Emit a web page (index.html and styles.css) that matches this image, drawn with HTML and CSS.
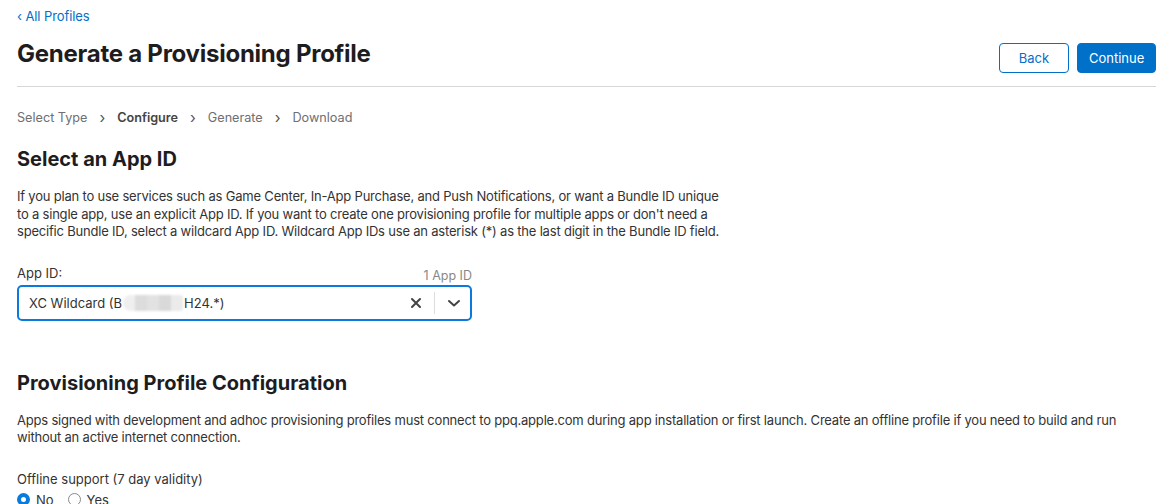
FILE: index.html
```html
<!DOCTYPE html>
<html lang="en">
<head>
<meta charset="utf-8">
<title>Generate a Provisioning Profile</title>
<link rel="stylesheet" href="styles.css">
</head>
<body>
<div class="page">
  <a class="back-link" href="#">&#8249; All Profiles</a>
  <header class="header">
    <h1 class="title">Generate a Provisioning Profile</h1>
    <div class="actions">
      <button class="btn btn-secondary">Back</button>
      <button class="btn btn-primary">Continue</button>
    </div>
  </header>
  <nav class="steps">
    <span class="step">Select Type</span>
    <span class="sep">&#8250;</span>
    <span class="step current">Configure</span>
    <span class="sep">&#8250;</span>
    <span class="step">Generate</span>
    <span class="sep">&#8250;</span>
    <span class="step">Download</span>
  </nav>

  <section class="section">
    <h2 class="section-title">Select an App ID</h2>
    <p class="desc narrow">If you plan to use services such as Game Center, In-App Purchase, and Push Notifications, or want a Bundle ID unique to a single app, use an explicit App ID. If you want to create one provisioning profile for multiple apps or don't need a specific Bundle ID, select a wildcard App ID. Wildcard App IDs use an asterisk (*) as the last digit in the Bundle ID field.</p>
    <div class="field">
      <div class="field-head">
        <span class="label">App ID:</span>
        <span class="count">1 App ID</span>
      </div>
      <div class="select">
        <span class="select-value">XC Wildcard (B<span class="blur"><i></i><i></i><i></i><i></i><i></i></span>H24.*)</span>
        <span class="select-controls">
          <svg class="icon-clear" width="12" height="12" viewBox="0 0 12 12"><path d="M2 2 L10 10 M10 2 L2 10" stroke="#444" stroke-width="2" stroke-linecap="round"/></svg>
          <span class="divider"></span>
          <svg class="icon-chevron" width="14" height="10" viewBox="0 0 14 10"><path d="M2 3 L7 7.5 L12 3" fill="none" stroke="#444" stroke-width="2" stroke-linecap="round" stroke-linejoin="round"/></svg>
        </span>
      </div>
    </div>
  </section>

  <section class="section config">
    <h2 class="section-title">Provisioning Profile Configuration</h2>
    <p class="desc wide">Apps signed with development and adhoc provisioning profiles must connect to ppq.apple.com during app installation or first launch. Create an offline profile if you need to build and run without an active internet connection.</p>
    <div class="offline">
      <div class="label">Offline support (7 day validity)</div>
      <div class="radios">
        <label class="radio"><span class="dot checked"></span>No</label>
        <label class="radio"><span class="dot"></span>Yes</label>
      </div>
    </div>
  </section>
</div>
</body>
</html>
```

FILE: styles.css
```css
* { box-sizing: border-box; }
html, body { margin: 0; padding: 0; background: #fff; }
body {
  font-family: Inter, "Noto Sans", "Liberation Sans", sans-serif;
  color: #333;
  font-size: 13px;
  -webkit-font-smoothing: antialiased;
}
.page {
  padding: 7px 5px 0 17px;
}
.back-link {
  display: inline-block;
  color: #0070c9;
  text-decoration: none;
  font-size: 13px;
  line-height: 18px;
  letter-spacing: -0.1px;
}
.header {
  display: flex;
  align-items: flex-start;
  justify-content: space-between;
  padding: 14px 0 13px;
  border-bottom: 1px solid #d6d6d6;
}
.title {
  margin: 0;
  font-size: 24px;
  font-weight: 700;
  color: #1d1d1f;
  letter-spacing: -0.25px;
  line-height: 30px;
}
.actions {
  display: flex;
  gap: 8px;
  margin-top: 4px;
}
.btn {
  font-family: inherit;
  font-size: 13px;
  height: 30px;
  border-radius: 4px;
  padding: 0 11px;
  cursor: pointer;
}
.btn-secondary {
  background: #fff;
  color: #0070c9;
  border: 1px solid #0070c9;
  width: 70px;
}
.btn-primary {
  background: #0070c9;
  color: #fff;
  border: 1px solid #0070c9;
  width: 79px;
}
.steps {
  display: flex;
  align-items: center;
  gap: 12px;
  padding-top: 22px;
  color: #6e6e73;
  font-size: 12.65px;
  line-height: 18px;
}
.step.current { color: #444; font-weight: 600; }
.sep { font-size: 15px; color: #555; }
.section-title {
  margin: 0;
  font-size: 20px;
  font-weight: 700;
  color: #1d1d1f;
  line-height: 26px;
}
.section { padding-top: 19px; }
.desc {
  margin: 16px 0 0;
  line-height: 17.5px;
  color: #333;
  font-size: 13px;
  letter-spacing: -0.2px;
}
.narrow { max-width: 716px; }
.wide { max-width: 1130px; }
.field {
  width: 455px;
  margin-top: 24px;
}
.field-head {
  display: flex;
  justify-content: space-between;
  align-items: flex-end;
  line-height: 17px;
}
.label { color: #333; }
.count { color: #888; font-size: 12.5px; position: relative; top: 2px; }
.select {
  margin-top: 3px;
  height: 36px;
  border: 2px solid #0a7bdc;
  border-radius: 5px;
  display: flex;
  align-items: center;
  justify-content: space-between;
  padding: 0 9px 0 10px;
}
.select-value { color: #333; display: flex; align-items: center; }
.blur {
  display: inline-flex;
  width: 60px;
  height: 16px;
  margin: 0 1px;
  border-radius: 8px 2px 2px 8px;
  overflow: hidden;
  filter: blur(1px);
}
.blur i { flex: 1; }
.blur i:nth-child(1) { background: #efefef; }
.blur i:nth-child(2) { background: #dcdcdc; }
.blur i:nth-child(3) { background: #e2e2e2; }
.blur i:nth-child(4) { background: #d9d9d9; }
.blur i:nth-child(5) { background: #ebebeb; }
.select-controls { display: flex; align-items: center; gap: 10px; }
.divider { width: 1px; height: 22px; background: #ddd; margin: 0 2px; }
.config { padding-top: 49px; }
.config .desc { margin-top: 16px; }
.offline { margin-top: 23px; }
.offline .label { line-height: 18px; }
.radios { display: flex; gap: 14px; margin-top: 4px; }
.radio { display: flex; align-items: center; gap: 6px; color: #333; }
.dot {
  width: 13px; height: 13px; border-radius: 50%;
  border: 1px solid #888; background: #fff;
}
.dot.checked {
  border: 4px solid #0a7bdc;
}
```
